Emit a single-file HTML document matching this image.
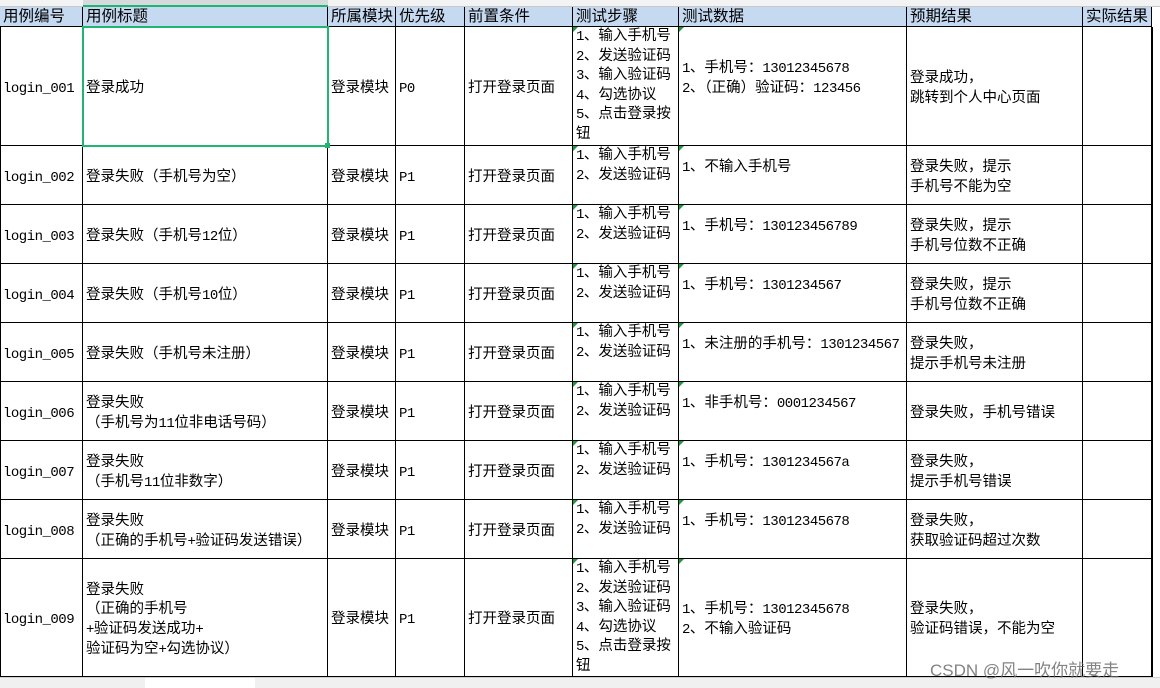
<!DOCTYPE html>
<html><head><meta charset="utf-8"><style>
html,body{margin:0;padding:0;background:#fff;width:1160px;height:688px;overflow:hidden;position:relative}
body{font-family:"Liberation Mono","Noto Sans CJK SC",monospace;font-size:14.5px;color:#000}
.c{position:absolute;box-sizing:border-box;border-right:1px solid #000;border-bottom:1px solid #000;display:flex;align-items:center;padding-left:3px;padding-top:7px;line-height:19.6px;white-space:nowrap;overflow:hidden}
.c>div{width:100%}
.t{align-items:flex-start;padding-top:1px}
.h{background:#c5d9f1;border-bottom:1px solid #000;line-height:20px;font-size:15.5px;padding-top:1px;font-family:"Liberation Sans","Noto Sans CJK SC",sans-serif}
.tri::before{content:"";position:absolute;left:0;top:0;border-top:5px solid #1a9a3a;border-right:5px solid transparent}
.a{font-size:14px;letter-spacing:-0.5px}
</style></head><body>
<div style="position:absolute;left:0;top:0;width:1160px;height:7px;background:#f3f3f3;border-bottom:1px solid #c8c8c8;box-sizing:border-box"></div>
<div style="position:absolute;left:83px;top:0;width:245px;height:7px;background:#d6dadd;border-bottom:2px solid #21b573;box-sizing:border-box"></div>
<div style="position:absolute;left:1152px;top:27px;width:8px;height:650px;background:#fff;border-left:1px solid #000"></div>
<div id="g"></div>
<script>
var cols=[0,83,328,396,465,573,679,907,1083,1152];
var rows=[27,146,205,264,323,382,441,500,559,677];
var hdr=["用例编号","用例标题","所属模块","优先级","前置条件","测试步骤","测试数据","预期结果","实际结果"];
var S5="1、输入手机号<br>2、发送验证码<br>3、输入验证码<br>4、勾选协议<br>5、点击登录按<br>钮";
var S2="1、输入手机号<br>2、发送验证码";
var d=[
["login_001","登录成功",S5,"1、手机号：13012345678<br>2、（正确）验证码：123456<br>&nbsp;","登录成功，<br>跳转到个人中心页面"],
["login_002","登录失败（手机号为空）",S2,"1、不输入手机号<br>&nbsp;","登录失败，提示<br>手机号不能为空"],
["login_003","登录失败（手机号12位）",S2,"1、手机号：130123456789<br>&nbsp;","登录失败，提示<br>手机号位数不正确"],
["login_004","登录失败（手机号10位）",S2,"1、手机号：1301234567<br>&nbsp;","登录失败，提示<br>手机号位数不正确"],
["login_005","登录失败（手机号未注册）",S2,"1、未注册的手机号：1301234567<br>&nbsp;","登录失败，<br>提示手机号未注册"],
["login_006","登录失败<br>（手机号为11位非电话号码）",S2,"1、非手机号：0001234567<br>&nbsp;","登录失败，手机号错误"],
["login_007","登录失败<br>（手机号11位非数字）",S2,"1、手机号：1301234567a<br>&nbsp;","登录失败，<br>提示手机号错误"],
["login_008","登录失败<br>（正确的手机号+验证码发送错误）",S2,"1、手机号：13012345678<br>&nbsp;","登录失败，<br>获取验证码超过次数"],
["login_009","登录失败<br>（正确的手机号<br>+验证码发送成功+<br>验证码为空+勾选协议）",S5,"1、手机号：13012345678<br>2、不输入验证码","登录失败，<br>验证码错误，不能为空"]
];
var h="";
function asc(s){return s.replace(/(<br>|&nbsp;)|([A-Za-z0-9_+]+)/g,function(m,a,b){return a?a:'<span class="a">'+b+'</span>';});}
function cell(ci,top,bot,txt,cls){
 var l=cols[ci],w=cols[ci+1]-l;
 if(cls!="h")txt=asc(txt);
 h+='<div class="c '+cls+'" style="left:'+l+'px;top:'+top+'px;width:'+w+'px;height:'+(bot-top)+'px"><div>'+txt+'</div></div>';
}
for(var i=0;i<9;i++)cell(i,7,27,hdr[i],"h");
for(var r=0;r<9;r++){
 var t=rows[r],b=rows[r+1],x=d[r];
 var vals=[x[0],x[1],"登录模块",r==0?"P0":"P1","打开登录页面",x[2],x[3],x[4],""];
 for(var i=0;i<9;i++){
  var cls="";
  if(i==5)cls="t tri";
  if(i==6)cls="tri";
  cell(i,t,b,vals[i],cls);
 }
}
document.getElementById("g").outerHTML=h;
</script>
<div style="position:absolute;left:0;top:27px;width:1px;height:650px;background:#000"></div>
<div style="position:absolute;left:82px;top:26px;width:247px;height:121px;border:2px solid #21b573;box-sizing:border-box"></div>
<div style="position:absolute;left:325px;top:143px;width:5px;height:5px;background:#21b573"></div>
<div style="position:absolute;left:0;top:677px;width:1160px;height:11px;background:#f0f0f0;border-top:1px solid #d0d0d0"></div>
<div style="position:absolute;left:145px;top:678px;width:110px;height:10px;background:#fff"></div>
<div style="position:absolute;left:930px;top:656px;font-family:'Liberation Sans','Noto Sans CJK SC',sans-serif;font-size:17px;color:rgba(100,100,100,0.8);white-space:nowrap">CSDN @风一吹你就要走</div>
</body></html>
